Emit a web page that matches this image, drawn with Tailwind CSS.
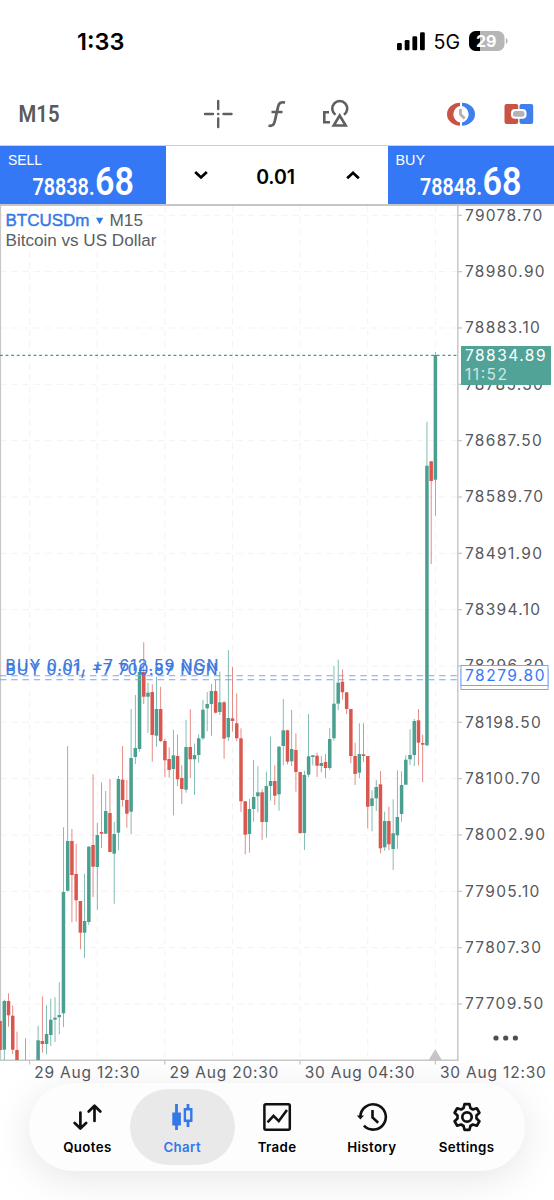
<!DOCTYPE html>
<html lang="en">
<head>
  <meta charset="UTF-8" />
  <meta name="viewport" content="width=device-width, initial-scale=1" />
  <title>BTCUSDm M15</title>
  <script src="https://cdn.jsdelivr.net/npm/@tailwindcss/browser@4"></script>
</head>
<body class="bg-white font-['Inter',sans-serif] text-black">
<div class="w-[554px] h-[1200px] flex flex-col overflow-hidden">

  <!-- Status bar -->
  <div class="h-[83px] shrink-0 flex justify-between pl-[77px] pr-[45px]">
    <span class="text-[23.5px] leading-[28px] font-semibold pt-[28px]">1:33</span>
    <div class="flex items-start">
      <svg class="mt-[32px]" width="28" height="19" viewBox="0 0 28 19">
        <rect x="0" y="11" width="4.8" height="7.2" rx="1.3" />
        <rect x="7.7" y="8" width="4.8" height="10.2" rx="1.3" />
        <rect x="15.4" y="4.3" width="4.8" height="13.9" rx="1.3" />
        <rect x="23" y="0.3" width="4.8" height="17.9" rx="1.3" />
      </svg>
      <svg class="mt-[26px] ml-[8px]" width="76" height="30" viewBox="433 26 76 30">
        <text x="433.5" y="49" font-size="19.5" textLength="26.5" lengthAdjust="spacingAndGlyphs">5G</text>
        <path d="M475.5 31h4.5v20h-4.5a6.5 6.5 0 0 1-6.5-6.5v-7A6.5 6.5 0 0 1 475.5 31z" />
        <path d="M480 31h18a6.5 6.5 0 0 1 6.5 6.5v7a6.5 6.5 0 0 1-6.5 6.5H480z" fill="#b6b6b6" />
        <path d="M505.8 38v6c1.5-.8 1.8-1.6 1.8-3s-.3-2.2-1.8-3z" fill="#b6b6b6" />
        <text x="476" y="46.7" font-size="15.8" font-weight="700" fill="#fff" textLength="20.5" lengthAdjust="spacingAndGlyphs">29</text>
      </svg>
    </div>
  </div>

  <!-- Toolbar -->
  <svg class="shrink-0" width="554" height="62" viewBox="0 83 554 62" fill="none" stroke="#5f5f5f" stroke-width="2.4">
    <text x="18.5" y="122" font-family="Roboto" font-weight="600" font-size="23.8" fill="#5a5a5a" stroke="none" textLength="41" lengthAdjust="spacingAndGlyphs">M15</text>
    <path d="M218.2 101v8M218.2 118.5v8.5M205 114h8M223.5 114h8" stroke-linecap="round" />
    <circle cx="218.2" cy="114" r="1.3" fill="#5f5f5f" stroke="none" />
    <path d="M268.5 125.5c3.4 1 5.4-.4 6.2-4l3.5-15.2c.8-3.4 2.9-4.7 6.8-3.7M271.5 112h11" stroke-width="2.7" />
    <path d="M329 112.2h-4.7v10h5.7M335.5 114.700a7.5 7.5 0 1 1 8.5 0M339.7 115.500l-6 10h12z" stroke-width="2.6" />
    <g stroke="none">
      <path d="M460 102.7A13 11.5 0 0 0 460 125.7V122.5A8.5 8.5 0 0 1 460 105.9z" fill="#c95446" />
      <path d="M462 102.7A13 11.5 0 0 1 462 125.7V122.5A8.5 8.5 0 0 0 462 105.9z" fill="#4080ec" />
      <rect x="504.5" y="104" width="13.7" height="20" rx="2" fill="#c95446" />
      <rect x="519.5" y="104" width="13.7" height="20" rx="2" fill="#4080ec" />
      <rect x="511" y="109" width="15.5" height="9.7" rx="4" fill="#fff" />
      <rect x="513" y="111" width="11.5" height="5.7" rx="2.5" fill="#b3b3b3" />
    </g>
    <path d="M460.5 109v5.5l4.2 4" stroke="#b3b3b3" stroke-width="2.8" />
  </svg>

  <!-- One click trading -->
  <div class="h-[61px] shrink-0 flex border-t-[1.500px] border-b-2 border-t-[#cfcfcf] border-b-[#c6c6c6]">
    <div class="w-[166px] bg-[#3478f6]">
      <svg width="166" height="58" viewBox="0 146 166 58" fill="#fff">
        <text x="8" y="164.5" font-family="Liberation Sans" font-size="14.5" textLength="34" lengthAdjust="spacingAndGlyphs">SELL</text>
        <text x="32.5" y="194.5" font-family="Roboto" font-weight="600" font-size="23" textLength="62" lengthAdjust="spacingAndGlyphs">78838.</text>
        <text x="95" y="194.5" font-family="Roboto" font-weight="600" font-size="39" textLength="39" lengthAdjust="spacingAndGlyphs">68</text>
      </svg>
    </div>
    <div class="flex-1 flex items-center justify-between px-[28px]">
      <svg width="14" height="10" viewBox="0 0 14 10" fill="none" stroke="#000" stroke-width="2.8"><path d="M1.2 2l5.800 5.400L12.800 2" /></svg>
      <span class="text-[19.5px] font-semibold tracking-[-0.1px] pt-[5px] pr-[3px]">0.01</span>
      <svg width="14" height="10" viewBox="0 0 14 10" fill="none" stroke="#000" stroke-width="2.8"><path d="M1.2 8.2L7 2.800l5.800 5.400" /></svg>
    </div>
    <div class="w-[166px] bg-[#3478f6]">
      <svg width="166" height="58" viewBox="388 146 166 58" fill="#fff">
        <text x="395.5" y="164.5" font-family="Liberation Sans" font-size="14.5" textLength="29.5" lengthAdjust="spacingAndGlyphs">BUY</text>
        <text x="420" y="194.5" font-family="Roboto" font-weight="600" font-size="23" textLength="62" lengthAdjust="spacingAndGlyphs">78848.</text>
        <text x="482.5" y="194.5" font-family="Roboto" font-weight="600" font-size="39" textLength="39" lengthAdjust="spacingAndGlyphs">68</text>
      </svg>
    </div>
  </div>

  <!-- Chart -->
  <svg class="shrink-0" width="554" height="877" viewBox="0 206 554 877">
    <g id="grid" stroke="#f3f3f3" stroke-dasharray="6.4 4.86"></g>
    <g id="axis" stroke="#c8c8c8" stroke-width="1.3">
      <path d="M0.5 206V1060" />
      <path d="M457.8 206V1060.3" stroke-width="1.5" />
      <path d="M0 1060.3H458.5" stroke-width="1.5" />
    </g>
    <path d="M435.3 1049l6.7 11.3h-13.4z" fill="#c6c6c6" />
    <clipPath id="plot"><rect x="0" y="206" width="457" height="854" /></clipPath>
    <g id="candles" clip-path="url(#plot)"></g>
    <path d="M0 355.4H457" stroke="#3b9f8f" stroke-width="1.3" stroke-dasharray="2.8 2.8" />
    <path d="M0 675.7H457M0 679.7H457" stroke="#7ba6ef" stroke-width="1.1" stroke-dasharray="6.4 4.86" />
    <g id="labels" font-size="15.5" fill="#56585d"></g>

    <!-- open positions share almost the same price, so their captions stack -->
    <g font-size="15.5" fill="#3b78de" stroke="#3b78de" stroke-width="0.2">
      <text x="5.5" y="671" textLength="213" lengthAdjust="spacing">BUY 0.01, +7 612.59 NGN</text>
      <text x="5.5" y="675" textLength="212" lengthAdjust="spacing">BUY 0.01, +7 700.87 NGN</text>
    </g>

    <rect x="461" y="669.5" width="87" height="20" fill="#fff" stroke="#7ba6ef" />
    <rect x="461" y="665.5" width="87" height="20" fill="#fff" stroke="#7ba6ef" />
    <text x="465" y="681" font-size="15.5" fill="#3478f6" textLength="79.5" lengthAdjust="spacing">78279.80</text>

    <rect x="461" y="346" width="90" height="39" fill="#52a397" />
    <text x="465" y="361.3" font-size="15.5" fill="#fff" textLength="80.5" lengthAdjust="spacing">78834.89</text>
    <text x="465" y="379.5" font-size="15.5" fill="#cfe6e2" textLength="42" lengthAdjust="spacing">11:52</text>

    <g font-family="Liberation Sans" font-size="16.3" fill="#5b5d62">
      <text x="5.5" y="225.7" fill="#3478e8" stroke="#3478e8" stroke-width="0.4" textLength="84" lengthAdjust="spacingAndGlyphs">BTCUSDm</text>
      <path d="M96 217.8h7.3l-3.65 6.5z" fill="#3478e8" />
      <text x="109.5" y="225.7" textLength="33.5" lengthAdjust="spacingAndGlyphs">M15</text>
      <text x="5.5" y="246" textLength="151" lengthAdjust="spacingAndGlyphs">Bitcoin vs US Dollar</text>
    </g>
    <g fill="#4d4e52">
      <circle cx="496" cy="1038" r="2.6" />
      <circle cx="505.7" cy="1038" r="2.6" />
      <circle cx="515.4" cy="1038" r="2.6" />
    </g>
  </svg>

  <!-- Tab bar -->
  <nav class="mx-[29px] h-[88px] shrink-0 rounded-full bg-[#fdfdfd] shadow-[0_8px_40px_rgba(0,0,0,0.10)] pl-[11px] pr-[11px] py-[6px] grid grid-cols-5 text-[13.3px] font-semibold tracking-[0.35px]">
    <div class="flex flex-col items-center pt-[13px]">
      <svg width="30" height="30" viewBox="72 1102 30 30" fill="none" stroke="#111" stroke-width="2.7" stroke-linecap="round" stroke-linejoin="round"><path d="M80.4 1112.5v15.5M74.7 1123l5.7 5.5 5.7-5.5M94.5 1121v-15M88.7 1111.5l5.8-5.7 5.8 5.7" /></svg>
      <span class="mt-[6px]">Quotes</span>
    </div>
    <div class="-mx-[5px] rounded-full bg-[#e9e9e9] flex flex-col items-center pt-[13px] text-[#3478e8]">
      <svg width="30" height="30" viewBox="167 1102 30 30" fill="none" stroke="#3478e8" stroke-width="2.8"><path d="M176.5 1104v26M188 1104v5M188 1121v6" /><path d="M172.3 1112.5h8.6v13h-8.6z" fill="#3478e8" stroke="none" /><path d="M184.9 1109.2h6.4v11.6h-6.4z" stroke-width="2.4" /></svg>
      <span class="mt-[6px]">Chart</span>
    </div>
    <div class="flex flex-col items-center pt-[13px]">
      <svg width="30" height="30" viewBox="262 1102 30 30" fill="none" stroke="#111" stroke-width="2.5"><rect x="264.4" y="1104.3" width="25.4" height="25.4" rx="1.5" /><path d="M267.5 1122.3l6-6.5 5.3 5.3 8.2-11" /></svg>
      <span class="mt-[6px]">Trade</span>
    </div>
    <div class="flex flex-col items-center pt-[13px]">
      <svg width="32" height="30" viewBox="355 1102 32 30" fill="none" stroke="#111" stroke-width="2.6"><path d="M359.4 1117a12.7 12.7 0 1 1 3.5 8.7" /><path d="M355.8 1115.5h7.2l-3.6 4z" fill="#111" stroke="none" /><path d="M371.5 1110v7.5l5.7 5.2" /></svg>
      <span class="mt-[6px]">History</span>
    </div>
    <div class="flex flex-col items-center pt-[13px]">
      <svg width="30" height="30" viewBox="-15 -15 30 30" fill="none" stroke="#111" stroke-width="2.7" stroke-linejoin="round"><path d="M-3.4-9l.9-3.8h5l.9 3.8 2.5 1.5 3.9-1.2 2.6 4.4-2.9 2.7v3.2l2.9 2.7-2.6 4.4-3.9-1.2-2.5 1.5-.9 3.8h-5l-.9-3.8-2.5-1.5-3.9 1.2-2.6-4.4 2.9-2.7v-3.2l-2.9-2.7 2.6-4.4 3.9 1.2z" /><circle r="4.7" /></svg>
      <span class="mt-[6px]">Settings</span>
    </div>
  </nav>
</div>

<script>
  const GREEN = '#4a9f90';
  const RED = '#d9574f';
  const step = 4.2265;
  const lastX = 435.4;

  // g/r, high, body top, body bottom, low
  const candles = [
    ['r',1021,1021,1050,1050], ['g',999.7,1001,1049.7,1060], ['r',993.3,1001,1015.3,1026.7], ['r',1005.3,1015.7,1049.7,1054], ['r',1031.7,1050,1060,1060],
    null, ['r',1038.3,1062,1064,1066], null, null, ['g',1025.7,1040.3,1060,1060],
    ['r',996.3,1041,1044,1052.7], ['g',1005.3,1034,1044,1054.3], ['g',998.7,1019.7,1035,1046], ['g',997.3,1017.7,1019.7,1042], ['g',982.3,1015,1017.3,1034.3],
    ['g',827.3,892,1013.3,1027], ['g',746,841,890.7,891.7], ['r',829,841,875,922.3], ['r',843.7,874,900.3,921.7], ['r',901,901,932.7,949.3],
    ['g',873.7,921,932.7,958], ['g',846,846.7,922,925], ['r',774.3,845,866.7,897], ['g',822.7,835,867,909.7], ['r',782.7,832,833.7,848],
    ['g',791,811,833.7,833.7], ['r',779,813,852,852.3], ['g',822,834,853.7,903.7], ['g',776,779,832.7,850.3], ['r',746,779.7,800,806.7],
    ['r',780,800,813.7,827.7], ['g',709,758,811.7,834.3], ['g',695,748,757,764], ['g',668,672,749,751.7], ['r',642.3,672,696.7,704],
    ['g',682.7,692.7,696.7,732.7], ['r',684.3,692,735,761.7], ['g',676.7,709,735.7,746.7], ['r',686.7,709,741,742], ['r',738.7,741,760.3,777.3],
    ['r',747.3,759,770,777.7], ['g',729.7,755.3,769,815.3], ['r',734.7,756,779.3,786], ['r',765.3,778,789,804], ['g',720,747,789.7,792.7],
    ['r',709.3,747,759.3,778], ['g',743.7,755,759.3,795], ['g',734.3,738.3,755,762.7], ['g',700,709.7,738.3,740], ['g',692,704,708.3,731.3],
    ['g',684,691,704,735.7], ['r',680,691,712.7,713.3], ['g',671.7,702.3,712,715], ['r',701,702.3,738.7,758.7], ['g',650,718,737.3,741],
    ['r',666.7,718.3,721,731.7], ['r',693.3,723.3,738.3,741], ['r',728.3,738.3,801.3,812], ['r',801.3,801.3,834.7,854.3], ['g',798.7,809,834,852.7],
    ['g',760,797,809,821.7], ['g',766.3,792.3,796.3,812.3], ['r',789.3,792.3,822,840], ['g',771.7,786,822,837.7], ['g',736.7,781,786,800.7],
    ['r',765.3,781,795.7,805], ['g',746,746.7,794.3,810.7], ['g',699,730.3,746,765.3], ['r',729.7,730.3,761.7,764.3], ['g',710,749,761.3,766],
    ['r',733.3,750,772,791.7], ['r',772,772,833,834], ['g',770.7,775,833,850], ['g',714,756.3,774.7,777], ['g',755,755.3,757,765.3],
    ['r',752.7,755.7,765.7,777], ['g',755.7,763,766,772.3], ['r',754,762,768,778.3], ['g',728,739,768,770], ['g',666,703.7,738.3,740.7],
    ['g',659.7,682.7,703.7,710.3], ['r',669.3,681.7,692.3,699.7], ['r',692.3,692.3,709,714], ['r',709,709,756,763.3], ['r',742.7,756,774,785],
    ['g',723.3,754,772.7,778.3], ['r',723.3,754.3,756,762], ['r',756,756,806.7,828.3], ['g',790.3,798.3,806,831.3], ['g',780,787,798.3,811],
    ['r',771,784.3,848.3,853.3], ['g',811.7,821,847.3,850.7], ['r',806.7,821,844.3,850], ['g',799.3,833.3,849,870], ['g',770.3,817,835.3,848.7],
    ['g',771.3,785,814,821.7], ['g',755.3,759.7,784.7,784.7], ['g',729.3,755,759.3,765], ['g',719,721,755,766], ['r',709,720.3,742.7,765.3],
    ['r',734.7,743,744.7,782], ['g',421.7,465.7,745.3,746.3], ['r',461,461.3,481,564], ['g',352,355,479.7,515.7]
  ];

  let html = '';
  candles.forEach((c, i) => {
    if (!c) return;
    const x = lastX - step * (candles.length - 1 - i);
    const color = c[0] === 'g' ? GREEN : RED;
    html += `<rect x="${x - 0.4}" y="${c[1]}" width="0.8" height="${c[4] - c[1]}" fill="${color}" fill-opacity="0.85" />`;
    html += `<rect x="${x - 1.75}" y="${c[2]}" width="3.5" height="${c[3] - c[2]}" fill="${color}" />`;
  });
  document.getElementById('candles').innerHTML = html;

  const prices = ['79078.70', '78980.90', '78883.10', '78785.30', '78687.50', '78589.70', '78491.90', '78394.10',
    '78296.30', '78198.50', '78100.70', '78002.90', '77905.10', '77807.30', '77709.50'];
  const times = [['29 Aug 12:30', 29.6], ['29 Aug 20:30', 164.8], ['30 Aug 04:30', 300.1], ['30 Aug 12:30', 435.4]];
  let grid = '', ticks = '', labels = '';

  prices.forEach((p, i) => {
    const y = 215.3 + i * 56.335;
    grid += `<path d="M0 ${y}H457" />`;
    ticks += `<path d="M458 ${y}H462" />`;
    labels += `<text x="465" y="${y + 5.5}" letter-spacing="1.3">${p}</text>`;
  });
  for (let i = 0; i < 7; i++) {
    grid += `<path d="M${29.6 + i * 67.63} 206V1060" />`;
  }
  times.forEach(([t, x]) => {
    ticks += `<path d="M${x} 1060V1064.5" />`;
    labels += `<text x="${x + 4.6}" y="1078" letter-spacing="0.8">${t}</text>`;
  });
  document.getElementById('grid').innerHTML = grid;
  document.getElementById('axis').innerHTML += ticks;
  document.getElementById('labels').innerHTML = labels;
</script>
</body>
</html>
